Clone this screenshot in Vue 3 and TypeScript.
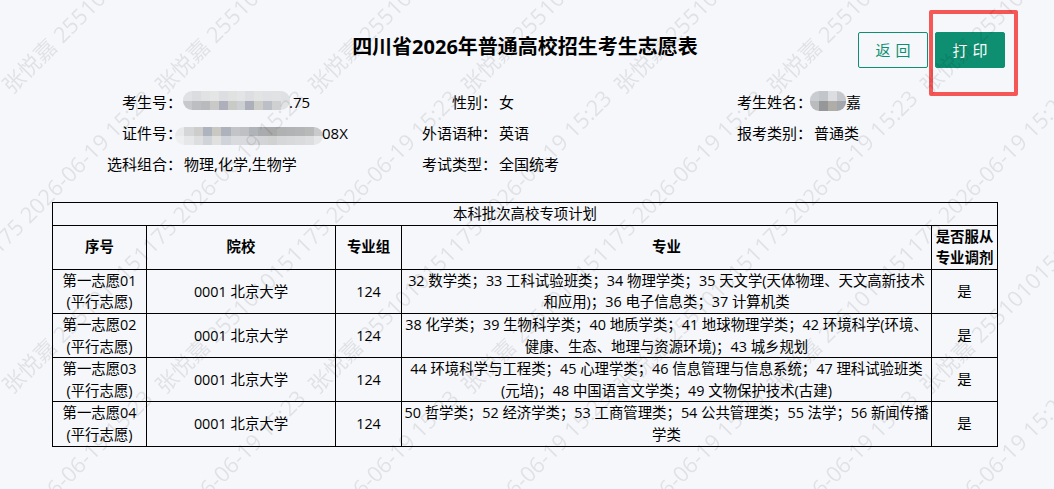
<script setup lang="ts">
interface Wish { order: string; lines: string[] }

const watermark = '张悦嘉 2551010151175 2026-06-19 15:23'
const marks: { x: number; y: number }[] = []
for (let r = -1; r < 3; r++) {
  for (let c = -3; c < 8; c++) {
    marks.push({ x: 12 + 153 * c, y: 95 + 300 * r })
  }
}

const maskA = [
  ['#dfe1e4', '#dadcdf', '#e0e2e3', '#e4e6e6', '#dcdee1', '#e0e2e2', '#e2e4e6', '#dcdee2', '#e2e4e4', '#dfe1e4', '#e0e2e4', '#dee0e3'],
  ['#c6c8cb', '#bdbec1', '#b9babd', '#c9c9c7', '#adb0ba', '#c9c9c5', '#cdd0d3', '#adb0bb', '#cdcec9', '#bdbfc6', '#ced0d2', '#e2e3e5'],
]
const maskB = [
  ['#e8e9eb', '#d4d6d7', '#cdcdcc', '#adb3bf', '#c9c8c3', '#adb2bd', '#c2c4c8', '#bec0c4', '#b0b3b7', '#a9abae', '#a8a9a8', '#b0b1b1', '#b2b3b4', '#b4b5b6', '#b8b9b9', '#c9cacc'],
  ['#eeeff1', '#e6e7e8', '#dddee0', '#d0d3d8', '#e0e1df', '#d0d3d9', '#d8dade', '#d8dade', '#d6d8dc', '#d2d4d6', '#d0d2d2', '#d6d7d8', '#d8d9da', '#dadbdc', '#dddedf', '#e6e7e9'],
]
const maskC = [
  ['#c9ccd0', '#c2c5c9', '#dbdde0', '#c5c8cc'],
  ['#b9bbbc', '#959799', '#b0aca8', '#a3a7ad'],
]

const wishes: Wish[] = [
  { order: '第一志愿01', lines: ['32 数学类；33 工科试验班类；34 物理学类；35 天文学(天体物理、天文高新技术', '和应用)；36 电子信息类；37 计算机类'] },
  { order: '第一志愿02', lines: ['38 化学类；39 生物科学类；40 地质学类；41 地球物理学类；42 环境科学(环境、', '健康、生态、地理与资源环境)；43 城乡规划'] },
  { order: '第一志愿03', lines: ['44 环境科学与工程类；45 心理学类；46 信息管理与信息系统；47 理科试验班类', '(元培)；48 中国语言文学类；49 文物保护技术(古建)'] },
  { order: '第一志愿04', lines: ['50 哲学类；52 经济学类；53 工商管理类；54 公共管理类；55 法学；56 新闻传播', '学类'] },
]
</script>

<template>
  <div class="page">
    <header class="head">
      <h1 class="title">四川省2026年普通高校招生考生志愿表</h1>
      <div class="actions">
        <button class="btn ghost">返回</button>
        <button class="btn solid">打印</button>
      </div>
    </header>

    <section class="info">
      <div class="item">
        <span class="label">考生号：</span>
        <span class="value">
          <span class="mask mask-a">
            <span v-for="(row, i) in maskA" :key="i" class="mask-row">
              <i v-for="(c, j) in row" :key="j" :style="{ background: c }"></i>
            </span>
          </span>.75
        </span>
      </div>
      <div class="item"><span class="label">性别：</span><span class="value">女</span></div>
      <div class="item">
        <span class="label">考生姓名：</span>
        <span class="value">
          <span class="mask mask-c">
            <span v-for="(row, i) in maskC" :key="i" class="mask-row">
              <i v-for="(c, j) in row" :key="j" :style="{ background: c }"></i>
            </span>
          </span>嘉
        </span>
      </div>
      <div class="item">
        <span class="label">证件号：</span>
        <span class="value">
          <span class="mask mask-b">
            <span v-for="(row, i) in maskB" :key="i" class="mask-row">
              <i v-for="(c, j) in row" :key="j" :style="{ background: c }"></i>
            </span>
          </span>08X
        </span>
      </div>
      <div class="item"><span class="label">外语语种：</span><span class="value">英语</span></div>
      <div class="item"><span class="label">报考类别：</span><span class="value">普通类</span></div>
      <div class="item"><span class="label">选科组合：</span><span class="value">物理,化学,生物学</span></div>
      <div class="item"><span class="label">考试类型：</span><span class="value">全国统考</span></div>
    </section>

    <table class="plan">
      <colgroup>
        <col class="c1" /><col class="c2" /><col class="c3" /><col class="c4" /><col class="c5" />
      </colgroup>
      <thead>
        <tr><th colspan="5" class="caption">本科批次高校专项计划</th></tr>
        <tr>
          <th>序号</th>
          <th>院校</th>
          <th>专业组</th>
          <th>专业</th>
          <th>是否服从<br />专业调剂</th>
        </tr>
      </thead>
      <tbody>
        <tr v-for="w in wishes" :key="w.order">
          <td>{{ w.order }}<br />(平行志愿)</td>
          <td>0001 北京大学</td>
          <td>124</td>
          <td class="majors"><template v-for="(l, i) in w.lines" :key="i">{{ l }}<br v-if="i === 0" /></template></td>
          <td>是</td>
        </tr>
      </tbody>
    </table>

    <div class="highlight"></div>

    <svg class="watermark" width="1054" height="489" viewBox="0 0 1054 489" aria-hidden="true">
      <text
        v-for="(m, i) in marks"
        :key="i"
        :x="m.x"
        :y="m.y"
        :transform="`rotate(-45 ${m.x} ${m.y})`"
      >{{ watermark }}</text>
    </svg>
  </div>
</template>

<style>
html, body { margin: 0; background: #f5f7fa; overflow: hidden; }
</style>

<style scoped>
.page {
  position: relative;
  width: 1054px;
  height: 489px;
  overflow: hidden;
  background: #f5f7fa;
  color: #000;
  font-family: "Open Sans", "Noto Sans CJK SC", sans-serif;
  font-size: 14.4px;
}
.head {
  display: grid;
  grid-template-columns: 1fr auto 1fr;
  width: 1050px;
  height: 36px;
  padding-top: 32px;
}
.title {
  grid-column: 2;
  align-self: start;
  margin: 0;
  font-size: 20px;
  font-weight: 700;
  line-height: 30px;
}
.actions {
  grid-column: 3;
  justify-self: end;
  display: flex;
  gap: 7px;
  margin-right: 45px;
}
.btn {
  width: 70px;
  height: 36px;
  padding: 0 0 0 5px;
  border: 1px solid #0e8f72;
  border-radius: 2px;
  font-family: inherit;
  font-size: 15px;
  letter-spacing: 5px;
  line-height: 1;
}
.ghost { background: transparent; color: #0e8f72; }
.solid { background: #0e8f72; color: #fff; }
.info {
  display: grid;
  grid-template-columns: repeat(3, 315px);
  grid-auto-rows: 31px;
  margin: 20px 0 21px 52px;
  font-size: 15px;
  line-height: 28px;
}
.item { display: flex; }
.label { flex: 0 0 130px; text-align: right; }
.value { display: flex; margin-left: 2px; white-space: pre; }
.mask {
  display: flex;
  flex-direction: column;
  flex: none;
  overflow: hidden;
  border-radius: 9px;
}
.mask-row { display: flex; flex: 1; }
.mask-row i { flex: 1; }
.mask-a { width: 107px; height: 19px; margin: 3px -1px 0 -1px; }
.mask-b { width: 148px; height: 18px; margin: 8px -1px 0 -9px; }
.mask-c { width: 36px; height: 20px; margin: 3px 0 0 -4px; }
.plan {
  width: 945px;
  margin-left: 52px;
  table-layout: fixed;
  border-collapse: collapse;
  line-height: 21.6px;
}
.c1 { width: 94px; }
.c2 { width: 189px; }
.c3 { width: 66px; }
.c4 { width: 530px; }
.c5 { width: 66px; }
th, td {
  padding: 0;
  border: 1px solid #000;
  text-align: center;
  white-space: nowrap;
}
th { font-weight: 700; }
th.caption { font-weight: 400; }
.highlight {
  position: absolute;
  left: 929px;
  top: 10px;
  width: 81px;
  height: 78px;
  border: 4px solid #f55656;
  border-radius: 2px;
}
.watermark {
  position: absolute;
  left: 0;
  top: 0;
  pointer-events: none;
  filter: blur(0.4px);
}
.watermark text {
  font-family: "Open Sans", "Noto Sans CJK SC", sans-serif;
  font-size: 22px;
  fill: rgba(0, 0, 0, 0.085);
}
</style>
